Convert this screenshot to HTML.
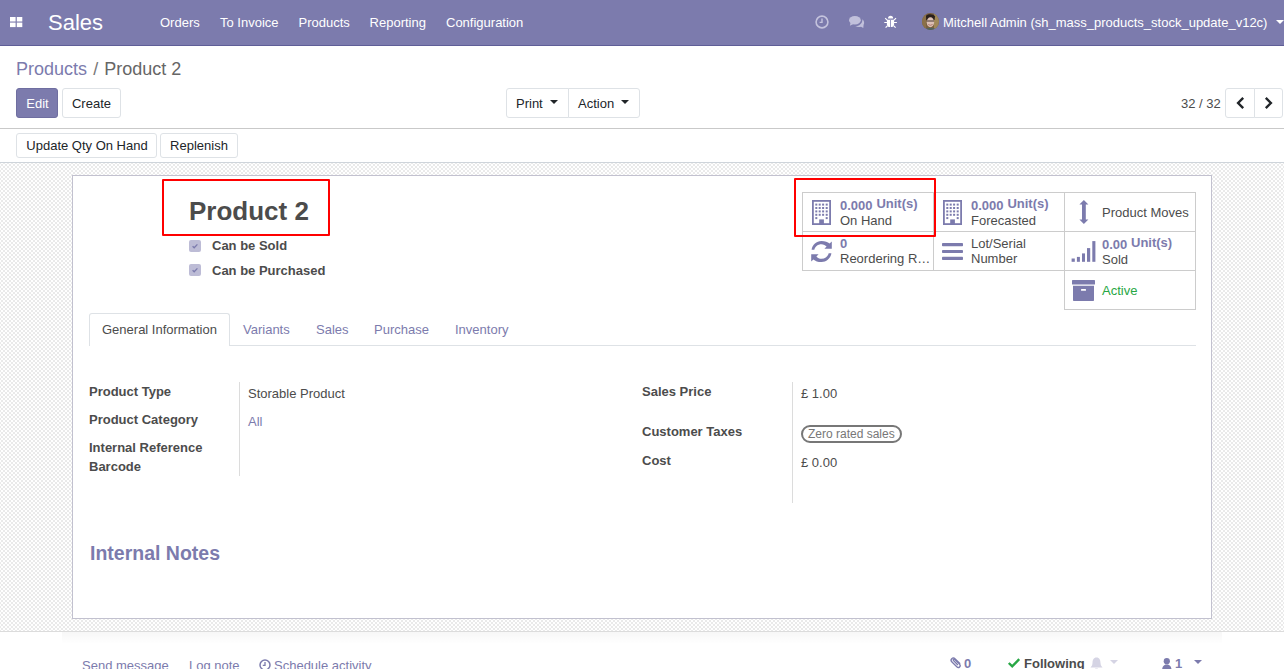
<!DOCTYPE html>
<html><head><meta charset="utf-8">
<style>
*{box-sizing:border-box;margin:0;padding:0}
html,body{width:1284px;height:669px;overflow:hidden;background:#fff;font-family:"Liberation Sans",sans-serif;font-size:13px;color:#4c4c4c}
.a{position:absolute;white-space:nowrap}
.t{position:absolute;white-space:nowrap;font-size:13px;line-height:15px}
.b{font-weight:bold}
.p{color:#7c7bad}
svg{position:absolute;overflow:visible}
#nav{position:absolute;left:0;top:0;width:1284px;height:46px;background:#7c7bad;border-bottom:1px solid #5f5e97}
#nav .t{color:#fff}
#cp{position:absolute;left:0;top:46px;width:1284px;height:83px;background:#fff;border-bottom:1px solid #c9c9c9}
.btn{position:absolute;height:30px;border:1px solid #dee2e6;border-radius:3px;background:#fff;color:#212529;font-size:13px;line-height:28px;padding-top:1px;text-align:center;white-space:nowrap}
#sb{position:absolute;left:0;top:129px;width:1284px;height:34px;background:#fff;border-bottom:1px solid #ced4da}
#bg{position:absolute;left:0;top:163px;width:1284px;height:469px;border-bottom:1px solid #dcdcdc;background:repeating-conic-gradient(#eaeaea 0 25%,#fff 0 50%) 3px 1px/4px 4px}
#sheet{position:absolute;left:72px;top:175px;width:1140px;height:444px;background:#fff;border:1px solid #c2c1cf}
.bb{position:absolute;border:1px solid #cccccc;background:#fff}
.red{position:absolute;border:2px solid #f00;border-radius:1px}
.cb{position:absolute;width:12px;height:12px;border-radius:2px;background:#bdbcd6}
.lbl{font-weight:bold}
.vl{position:absolute;width:1px;background:#dcdcdc}
</style></head><body>
<div id="nav">
  <svg style="left:10px;top:17px" width="13" height="10" viewBox="0 0 13 10"><g fill="#fff"><rect x="0" y="0" width="5.6" height="4.5"/><rect x="6.8" y="0" width="5.5" height="4.5"/><rect x="0" y="5.6" width="5.6" height="4.5"/><rect x="6.8" y="5.6" width="5.5" height="4.5"/></g></svg>
  <div class="a" style="left:48px;top:10px;font-size:22px;line-height:25px;color:#fff">Sales</div>
  <div class="t" style="left:160px;top:15px">Orders</div>
  <div class="t" style="left:220px;top:15px">To Invoice</div>
  <div class="t" style="left:298.5px;top:15px">Products</div>
  <div class="t" style="left:369.6px;top:15px">Reporting</div>
  <div class="t" style="left:446px;top:15px">Configuration</div>
  <!-- clock -->
  <svg style="left:815px;top:14.5px" width="14" height="14" viewBox="0 0 14 14"><circle cx="7" cy="7" r="5.9" fill="none" stroke="#c4c3dd" stroke-width="1.6"/><path d="M7 3.6V7.4H4.6" fill="none" stroke="#c4c3dd" stroke-width="1.4"/></svg>
  <!-- comments -->
  <svg style="left:846px;top:12px" width="22" height="18" viewBox="0 0 22 18"><g fill="#c1c0db"><ellipse cx="8.9" cy="8.2" rx="5.9" ry="4.2"/><path d="M4.6 10.5 L3.9 13.8 L7.4 11.9Z"/><path d="M16.3 7.2 C18.3 8.5 18.6 11.2 17.6 12.8 L17.3 15.9 L15 14.7 C12.8 15.3 10.5 15 9.2 14.3 C13 14 16.8 11.6 16.3 7.2Z"/></g></svg>
  <!-- bug -->
  <svg style="left:880px;top:12px" width="22" height="18" viewBox="0 0 22 18"><g fill="#fff"><path d="M8 6.4 C8 4.6 9 3.8 10.6 3.8 C12.2 3.8 13.2 4.6 13.2 6.4Z"/><path d="M6.9 7.8 H14.1 V12.5 C14.1 14.2 12.8 15.1 10.5 15.1 C8.2 15.1 6.9 14.2 6.9 12.5Z"/></g><path d="M5.2 6.2 L7.2 8.2 M16 6.2 L14 8.2 M4.3 10.5 H7 M16.9 10.5 H14 M5.6 15.6 L7.4 13.8 M15.6 15.6 L13.8 13.8" stroke="#fff" stroke-width="1.2"/><path d="M10.5 8 V15" stroke="#8c8bbb" stroke-width="0.9"/></svg>
  <!-- avatar -->
  <div class="a" style="left:922px;top:13px;width:17px;height:17px;border-radius:50%;overflow:hidden"><svg style="left:0;top:0" width="17" height="17" viewBox="0 0 17 17"><rect width="17" height="17" fill="#7a6040"/><rect x="0" y="0" width="4" height="17" fill="#8a7048"/><rect x="12" y="0" width="5" height="17" fill="#a08858"/><path d="M4 3 C5 0.5 12 0.5 13 3.5 L12.6 7 L4.2 7Z" fill="#2a201c"/><ellipse cx="8.4" cy="9.2" rx="3.7" ry="5" fill="#dcc0b4"/><path d="M4.8 7.6 H12 V8.6 H4.8Z" fill="#4a3a34"/><path d="M6.2 11.5 Q8.4 13 10.6 11.5" stroke="#a86a60" stroke-width="0.8" fill="none"/><path d="M3 17 C4 14 13 14 14 17Z" fill="#4f6460"/></svg></div>
  <div class="t" style="left:943px;top:15px">Mitchell Admin (sh_mass_products_stock_update_v12c)</div>
  <svg style="left:1276px;top:20px" width="8" height="4" viewBox="0 0 8 4"><path d="M0 0H8L4 4Z" fill="#fff"/></svg>
</div>
<div id="cp">
  <div class="a" style="left:16px;top:13px;font-size:18px;line-height:21px"><span style="color:#7c7bad">Products</span><span style="color:#777;margin-left:6.3px">/</span><span style="color:#666;margin-left:5.8px">Product 2</span></div>
  <div class="btn" style="left:16px;top:42px;width:42px;background:#7c7bad;border-color:#6f6ea0;color:#fff;padding-left:1px">Edit</div>
  <div class="btn" style="left:62px;top:42px;width:59px">Create</div>
  <div class="btn" style="left:506px;top:42px;width:63px;border-radius:3px 0 0 3px;text-align:left;padding-left:9px">Print</div>
  <svg style="left:550px;top:54px" width="8" height="4" viewBox="0 0 8 4"><path d="M0 0H8L4 4Z" fill="#212529"/></svg>
  <div class="btn" style="left:568px;top:42px;width:72px;border-radius:0 3px 3px 0;text-align:left;padding-left:9px">Action</div>
  <svg style="left:621px;top:54px" width="8" height="4" viewBox="0 0 8 4"><path d="M0 0H8L4 4Z" fill="#212529"/></svg>
  <div class="t" style="left:1181px;top:50px;color:#4c4c4c">32 / 32</div>
  <div class="btn" style="left:1225px;top:42px;width:30px;border-radius:3px 0 0 3px"></div>
  <div class="btn" style="left:1254px;top:42px;width:29px;border-radius:0 3px 3px 0"></div>
  <svg style="left:1236px;top:51px" width="9" height="12" viewBox="0 0 9 12"><path d="M7.2 0.9 L2.1 6 L7.2 11.1" fill="none" stroke="#212529" stroke-width="2.4"/></svg>
  <svg style="left:1263.5px;top:51px" width="9" height="12" viewBox="0 0 9 12"><path d="M1.8 0.9 L6.9 6 L1.8 11.1" fill="none" stroke="#212529" stroke-width="2.4"/></svg>
</div>
<div id="sb">
  <div class="btn" style="left:16px;top:4px;width:141px;height:25px;line-height:23px;padding:0 0 0 1px">Update Qty On Hand</div>
  <div class="btn" style="left:160px;top:4px;width:78px;height:25px;line-height:23px;padding:0">Replenish</div>
</div>
<div id="bg"></div>
<div id="sheet"></div>
<div class="a" style="left:62px;top:632px;width:1160px;height:12px;background:linear-gradient(rgba(0,0,0,.03),rgba(0,0,0,0))"></div>
<!-- SHEET CONTENT -->
<div class="a b" style="left:189px;top:196px;font-size:26px;line-height:30px;color:#4c4c4c">Product 2</div>
<div class="red" style="left:162px;top:179px;width:168px;height:57px"></div>
<div class="cb" style="left:189px;top:240px"></div>
<svg style="left:189px;top:240px" width="12" height="12" viewBox="0 0 12 12"><path d="M3.6 6.2 L5.2 7.8 L8.4 4.4" fill="none" stroke="#7c7bad" stroke-width="1.3"/></svg>
<div class="t b" style="left:212px;top:238px">Can be Sold</div>
<div class="cb" style="left:189px;top:264px"></div>
<svg style="left:189px;top:264px" width="12" height="12" viewBox="0 0 12 12"><path d="M3.6 6.2 L5.2 7.8 L8.4 4.4" fill="none" stroke="#7c7bad" stroke-width="1.3"/></svg>
<div class="t b" style="left:212px;top:263px">Can be Purchased</div>

<!-- button box -->
<div class="bb" style="left:802px;top:192px;width:132px;height:40px"></div>
<div class="bb" style="left:933px;top:192px;width:132px;height:40px"></div>
<div class="bb" style="left:1064px;top:192px;width:132px;height:40px"></div>
<div class="bb" style="left:802px;top:231px;width:132px;height:40px"></div>
<div class="bb" style="left:933px;top:231px;width:132px;height:40px"></div>
<div class="bb" style="left:1064px;top:231px;width:132px;height:40px"></div>
<div class="bb" style="left:1064px;top:270px;width:132px;height:40px"></div>
<div class="red" style="left:794px;top:178px;width:142px;height:59px"></div>

<!-- building icons -->
<svg id="bld1" style="left:812px;top:200px" width="19" height="25" viewBox="0 0 19 25">
 <rect x="0.9" y="0.9" width="17.2" height="23.2" fill="none" stroke="#7c7bad" stroke-width="1.8"/>
 <g fill="#7c7bad"><rect x="3.3" y="3.6" width="2" height="2"/><rect x="6.7" y="3.6" width="2" height="2"/><rect x="10.1" y="3.6" width="2" height="2"/><rect x="13.7" y="3.6" width="2" height="2"/>
 <rect x="3.3" y="7" width="2" height="2"/><rect x="6.7" y="7" width="2" height="2"/><rect x="10.1" y="7" width="2" height="2"/><rect x="13.7" y="7" width="2" height="2"/>
 <rect x="3.3" y="10.4" width="2" height="2"/><rect x="6.7" y="10.4" width="2" height="2"/><rect x="10.1" y="10.4" width="2" height="2"/><rect x="13.7" y="10.4" width="2" height="2"/>
 <rect x="3.3" y="13.8" width="2" height="2"/><rect x="6.7" y="13.8" width="2" height="2"/><rect x="10.1" y="13.8" width="2" height="2"/><rect x="13.7" y="13.8" width="2" height="2"/>
 <rect x="3.3" y="17.1" width="2" height="2"/><rect x="13.7" y="17.1" width="2" height="2"/>
 <rect x="7.2" y="19.4" width="4.7" height="5"/></g></svg>
<svg style="left:943px;top:200px" width="19" height="25" viewBox="0 0 19 25">
 <rect x="0.9" y="0.9" width="17.2" height="23.2" fill="none" stroke="#7c7bad" stroke-width="1.8"/>
 <g fill="#7c7bad"><rect x="3.3" y="3.6" width="2" height="2"/><rect x="6.7" y="3.6" width="2" height="2"/><rect x="10.1" y="3.6" width="2" height="2"/><rect x="13.7" y="3.6" width="2" height="2"/>
 <rect x="3.3" y="7" width="2" height="2"/><rect x="6.7" y="7" width="2" height="2"/><rect x="10.1" y="7" width="2" height="2"/><rect x="13.7" y="7" width="2" height="2"/>
 <rect x="3.3" y="10.4" width="2" height="2"/><rect x="6.7" y="10.4" width="2" height="2"/><rect x="10.1" y="10.4" width="2" height="2"/><rect x="13.7" y="10.4" width="2" height="2"/>
 <rect x="3.3" y="13.8" width="2" height="2"/><rect x="6.7" y="13.8" width="2" height="2"/><rect x="10.1" y="13.8" width="2" height="2"/><rect x="13.7" y="13.8" width="2" height="2"/>
 <rect x="3.3" y="17.1" width="2" height="2"/><rect x="13.7" y="17.1" width="2" height="2"/>
 <rect x="7.2" y="19.4" width="4.7" height="5"/></g></svg>
<!-- arrows-v -->
<svg style="left:1078.5px;top:200px" width="11" height="24" viewBox="0 0 11 24"><path d="M4.9 0 L9.4 4.6 H6.8 V19.4 H9.4 L4.9 24 L0.4 19.4 H3 V4.6 H0.4Z" fill="#7c7bad"/></svg>
<!-- refresh -->
<svg style="left:811px;top:241px" width="21" height="21" viewBox="0 0 21 21"><path d="M3.3 8.8 C4.2 5.3 7 3.2 10.4 3.2 C12.6 3.2 14.4 4.1 15.6 5.6 L13.4 7.8 H20.8 V0.4 L18.6 2.6 C16.6 1 14.2 0 10.4 0 C5.6 0 1.3 3.6 0.6 8.8Z" fill="#7c7bad"/><path d="M17.7 12.2 C16.8 15.7 14 17.8 10.6 17.8 C8.4 17.8 6.6 16.9 5.4 15.4 L7.6 13.2 H0.2 V20.6 L2.4 18.4 C4.4 20 6.8 21 10.6 21 C15.4 21 19.7 17.4 20.4 12.2Z" fill="#7c7bad"/></svg>
<!-- bars -->
<svg style="left:942px;top:243px" width="21" height="17" viewBox="0 0 21 17"><rect x="0" y="0" width="21" height="3.2" rx="0.8" fill="#7c7bad"/><rect x="0" y="6.9" width="21" height="3.2" rx="0.8" fill="#7c7bad"/><rect x="0" y="13.8" width="21" height="3.2" rx="0.8" fill="#7c7bad"/></svg>
<!-- signal -->
<svg style="left:1071px;top:241px" width="25" height="21" viewBox="0 0 25 21"><g fill="#7c7bad"><rect x="0.6" y="17.5" width="3.2" height="3.3"/><rect x="5.9" y="15.9" width="3" height="4.9"/><rect x="11" y="12.4" width="3" height="8.4"/><rect x="16" y="7.1" width="3.2" height="13.7"/><rect x="21.3" y="0.1" width="3.1" height="20.7"/></g></svg>
<!-- archive -->
<svg style="left:1072px;top:280px" width="23" height="21" viewBox="0 0 23 21"><rect x="0" y="0" width="23" height="4.6" rx="0.6" fill="#7c7bad"/><path d="M1 5.8 H22 V20.2 Q22 21 21.2 21 H1.8 Q1 21 1 20.2Z" fill="#7c7bad"/><rect x="9" y="9" width="5" height="1.8" rx="0.6" fill="#fff"/></svg>

<div class="t b p" style="left:840px;top:198px">0.000</div>
<div class="t b p" style="left:876.4px;top:196px">Unit(s)</div>
<div class="t" style="left:840px;top:213px">On Hand</div>
<div class="t b p" style="left:971px;top:198px">0.000</div>
<div class="t b p" style="left:1007.4px;top:196px">Unit(s)</div>
<div class="t" style="left:971px;top:213px">Forecasted</div>
<div class="t" style="left:1102px;top:205px">Product Moves</div>
<div class="t b p" style="left:840px;top:236px">0</div>
<div class="t" style="left:840px;top:251px">Reordering R…</div>
<div class="t" style="left:971px;top:236px">Lot/Serial</div>
<div class="t" style="left:971px;top:251px">Number</div>
<div class="t b p" style="left:1102px;top:237px">0.00</div>
<div class="t b p" style="left:1131px;top:235px">Unit(s)</div>
<div class="t" style="left:1102px;top:252px">Sold</div>
<div class="t" style="left:1102px;top:283px;color:#28a745">Active</div>

<!-- tabs -->
<div class="a" style="left:89px;top:345px;width:1107px;height:1px;background:#dee2e6"></div>
<div class="a" style="left:89px;top:313px;width:141px;height:33px;border:1px solid #dee2e6;border-bottom:none;border-radius:3px 3px 0 0;background:#fff"></div>
<div class="t" style="left:102px;top:322px;color:#4c4c4c">General Information</div>
<div class="t p" style="left:243px;top:322px">Variants</div>
<div class="t p" style="left:316px;top:322px">Sales</div>
<div class="t p" style="left:374px;top:322px">Purchase</div>
<div class="t p" style="left:455px;top:322px">Inventory</div>

<!-- fields left -->
<div class="t b" style="left:89px;top:384px">Product Type</div>
<div class="t b" style="left:89px;top:412px">Product Category</div>
<div class="t b" style="left:89px;top:440px">Internal Reference</div>
<div class="t b" style="left:89px;top:459px">Barcode</div>
<div class="vl" style="left:239px;top:382px;height:94px"></div>
<div class="t" style="left:248px;top:386px">Storable Product</div>
<div class="t p" style="left:248px;top:414px">All</div>
<!-- fields right -->
<div class="t b" style="left:642px;top:384px">Sales Price</div>
<div class="t b" style="left:642px;top:424px">Customer Taxes</div>
<div class="t b" style="left:642px;top:453px">Cost</div>
<div class="vl" style="left:792px;top:382px;height:121px"></div>
<div class="t" style="left:801px;top:386px">£ 1.00</div>
<div class="a" style="left:801px;top:425px;width:101px;height:18px;border:2px solid #777;border-radius:9px"></div>
<div class="a" style="left:808px;top:427px;font-size:12px;line-height:14px;color:#777">Zero rated sales</div>
<div class="t" style="left:801px;top:455px">£ 0.00</div>

<div class="a b p" style="left:90px;top:542px;font-size:19.5px;line-height:23px">Internal Notes</div>

<!-- chatter -->
<div class="t p" style="left:82px;top:658px">Send message</div>
<div class="t p" style="left:189px;top:658px">Log note</div>
<svg style="left:259px;top:659px" width="12" height="12" viewBox="0 0 12 12"><circle cx="6" cy="6" r="5" fill="none" stroke="#7c7bad" stroke-width="1.5"/><path d="M6 3V6.3H3.8" fill="none" stroke="#7c7bad" stroke-width="1.3"/></svg>
<div class="t p" style="left:274px;top:658px">Schedule activity</div>
<svg style="left:950px;top:657px" width="12" height="12" viewBox="0 0 12 12"><path d="M9.6 8.2 L5.2 3.8 C4.2 2.8 2.9 2.8 2.1 3.6 C1.3 4.4 1.4 5.7 2.3 6.6 L6.6 10.9 C7.4 11.7 8.4 11.7 9.1 11 C9.8 10.3 9.8 9.3 9 8.5 L4.8 4.3 C4.4 3.9 3.9 3.9 3.6 4.2 C3.3 4.5 3.3 5 3.7 5.4 L7.6 9.3" fill="none" stroke="#7c7bad" stroke-width="1.2" transform="translate(-0.6,-2.4) scale(1.12)"/></svg>
<div class="t b p" style="left:964px;top:656px">0</div>
<svg style="left:1008px;top:658px" width="12" height="10" viewBox="0 0 12 10"><path d="M0.8 5 L4.2 8.4 L11.2 1.2" fill="none" stroke="#28a745" stroke-width="2.4"/></svg>
<div class="t b" style="left:1024px;top:656px">Following</div>
<svg style="left:1090px;top:657px" width="13" height="13" viewBox="0 0 13 13"><path d="M6.5 0.5 C9.5 0.5 10.5 3 10.5 6 C10.5 9 12.5 10 12.5 10.5 H0.5 C0.5 10 2.5 9 2.5 6 C2.5 3 3.5 0.5 6.5 0.5Z M5 11.5 H8 C8 12.5 5 12.5 5 11.5Z" fill="#d5d4e4"/></svg>
<svg style="left:1110px;top:660px" width="8" height="4" viewBox="0 0 8 4"><path d="M0 0H8L4 4Z" fill="#d5d4e4"/></svg>
<svg style="left:1162px;top:657.5px" width="10" height="13" viewBox="0 0 10 13"><circle cx="4.8" cy="3.2" r="3.1" fill="#7c7bad"/><path d="M0 13 C0 8.8 1.6 6.6 4.8 6.6 C8 6.6 9.6 8.8 9.6 13Z" fill="#7c7bad"/></svg>
<div class="t b p" style="left:1175px;top:656px">1</div>
<svg style="left:1193.5px;top:660px" width="8" height="4" viewBox="0 0 8 4"><path d="M0 0H8L4 4Z" fill="#7c7bad"/></svg>
</body></html>
